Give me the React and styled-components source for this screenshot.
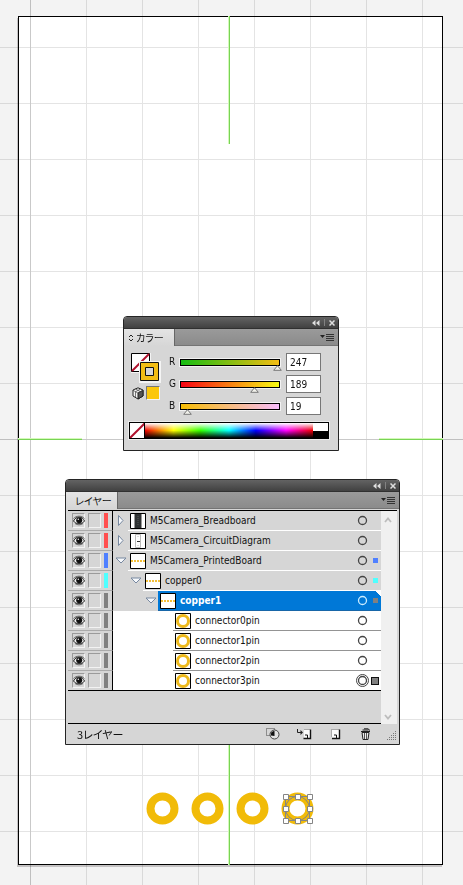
import React, { useState } from "react";
import styled, { createGlobalStyle, css } from "styled-components";

const Global = createGlobalStyle`
  *, *::before, *::after { box-sizing: border-box; }
  body {
    margin: 0;
    background: #f3f3f3;
    color: #111;
    font-family: "DejaVu Sans Condensed", "DejaVu Sans", "Noto Sans CJK JP", sans-serif;
    font-size: 10px;
    line-height: 16px;
  }
  button, input { font: inherit; color: inherit; margin: 0; padding: 0; }
  button { border: 0; background: none; }
  svg { display: block; }
`;

const Workspace = styled.main`
  position: relative;
  display: flex;
  min-height: 100vh;
  padding: 16px 20px 20px 18px;
  overflow: hidden;
`;

const Artboard = styled.section`
  flex: 1;
  border: 1px solid #000;
  background: #fff;
  box-shadow: -1px 2px 0 #c4c2c3;
`;

const Grid = styled.div`
  position: absolute;
  inset: 0;
  pointer-events: none;
  mix-blend-mode: multiply;
  background:
    linear-gradient(#c9c9c9, #c9c9c9) 30px 0 / 1px 100% no-repeat,
    linear-gradient(#c9c9c9, #c9c9c9) 0 439px / 100% 1px no-repeat,
    linear-gradient(90deg, #e4e4e4 1px, transparent 1px) 30px 0 / 56px 56px,
    linear-gradient(#e4e4e4 1px, transparent 1px) 0 47px / 56px 56px;
`;

const Guide = styled.i`
  position: absolute;
  background: #78d455;
  ${({ $axis }) =>
    $axis === "v"
      ? css`left: 229px; width: 1px; height: 128px; box-shadow: -1px 0 0 #d3f9b8;`
      : css`top: 439px; height: 1px; width: 64px; box-shadow: 0 -1px 0 #d3f9b8;`}
  ${({ $edge }) => $edge === "top" && "top: 16px;"}
  ${({ $edge }) => $edge === "bottom" && "bottom: 20px;"}
  ${({ $edge }) => $edge === "left" && "left: 18px;"}
  ${({ $edge }) => $edge === "right" && "right: 20px;"}
`;

const Rings = styled.div`
  position: absolute;
  left: 146px;
  top: 792px;
  display: flex;
  gap: 12px;
`;

const Window = styled.section`
  position: absolute;
  left: ${(p) => p.$left}px;
  top: ${(p) => p.$top}px;
  width: ${(p) => p.$width}px;
  border: 1px solid #242424;
  border-radius: 4px 4px 0 0;
  background: #d6d6d6;
`;

const TitleBar = styled.header`
  display: flex;
  justify-content: flex-end;
  align-items: center;
  height: 12px;
  border-radius: 3px 3px 0 0;
  background: linear-gradient(#636363, #414141);
  border-bottom: 1px solid #303030;
`;

const TitleButton = styled.button`
  display: grid;
  place-items: center;
  width: 12px;
  height: 11px;
`;

const TitleRule = styled.span`
  width: 1px;
  height: 7px;
  margin: 0 1px 0 2px;
  background: #828282;
`;

const TabBar = styled.div`
  display: flex;
  justify-content: space-between;
  height: 17px;
  background: linear-gradient(#9a9a9a, #8b8b8b);
  border-bottom: 1px solid #747474;
`;

const Tab = styled.button`
  display: flex;
  align-items: center;
  gap: 2px;
  height: 17px;
  width: ${(p) => p.$width}px;
  padding-left: ${(p) => p.$pad}px;
  background: linear-gradient(#e4e4e4, #d6d6d6);
  border-right: 1px solid #666;
  font-family: "Noto Sans CJK JP", sans-serif;
  font-feature-settings: "palt";
  font-size: 10px;
  line-height: 16px;
  white-space: nowrap;
`;

const MenuButton = styled.button`
  width: 14px;
  height: 16px;
  margin-right: 4px;
`;

const ColorBody = styled.div`
  padding: 7px 9px 11px 5px;
`;

const ColorTop = styled.div`
  display: grid;
  grid-template-columns: 40px 1fr;
`;

const SwatchColumn = styled.div`
  display: grid;
  grid-template-rows: 32px 14px;
  row-gap: 1px;
  padding-left: 2px;
`;

const SwatchRow = styled.div`
  display: flex;
  gap: 2px;
  align-items: center;
`;

const IconButton = styled.button`
  display: grid;
  place-items: center;
  width: ${(p) => p.$w}px;
  height: ${(p) => p.$h}px;
`;

const YellowSwatch = styled.button`
  width: 14px;
  height: 14px;
  border: 1px solid #f4f4f4;
  border-top-color: #777;
  border-left-color: #777;
  background: #fbc70b;
`;

const Channels = styled.div`
  display: grid;
  row-gap: 4px;
`;

const Channel = styled.div`
  display: grid;
  grid-template-columns: 10px 102px 35px;
  align-items: center;
  height: 18px;
`;

const ChannelName = styled.label`
  line-height: 18px;
`;

const Track = styled.div`
  height: 9px;
  border: 1px solid #f2f2f2;
  background: ${(p) => p.$fill};
  box-shadow: inset 0 0 0 1px #000;
`;

const Range = styled.input`
  appearance: none;
  display: block;
  width: 110px;
  height: 14px;
  margin: -1px -5px 0;
  background: transparent;
  &::-webkit-slider-runnable-track { height: 14px; }
  &::-webkit-slider-thumb {
    appearance: none;
    width: 9px;
    height: 6px;
    margin-top: 7px;
    background: url("data:image/svg+xml,%3Csvg xmlns='http://www.w3.org/2000/svg' width='9' height='6'%3E%3Cpath d='M4.5 .7L8.3 5.3H.7Z' fill='%23f2f2ec' stroke='%23777'/%3E%3C/svg%3E");
  }
`;

const NumberBox = styled.input`
  width: 35px;
  height: 18px;
  margin-left: 5px;
  padding-left: 3px;
  border: 1px solid #777;
  background: #fff;
  line-height: 16px;
`;

const Spectrum = styled.div`
  display: grid;
  grid-template-columns: 15px 1fr 15px;
  height: 17px;
  margin-top: 7px;
  border: 1px solid #000;
  outline: 1px solid #ececec;
`;

const Rainbow = styled.button`
  background:
    linear-gradient(#fff, rgba(255,255,255,0) 50%, rgba(0,0,0,0) 50%, #000),
    linear-gradient(90deg, #e00, #ff0 17%, #3f0 33%, #0ff 50%, #00f 66%, #f0f 84%, #e00);
`;

const MonoSwatch = styled.button`
  background: linear-gradient(#fff 50%, #000 50%);
`;

const LayerBody = styled.div`
  display: grid;
  grid-template-columns: 1fr 16px;
  margin: 1px 2px 0;
  border-top: 1px solid #000;
`;

const Tree = styled.ul`
  min-height: 213px;
  margin: 0;
  padding: 0;
  list-style: none;
  border-bottom: 1px solid #000;
`;

const Row = styled.li`
  display: grid;
  grid-template-columns: 45px 1fr;
  grid-template-rows: 100%;
  height: 20px;
  background: ${(p) => (p.$leaf ? "#fff" : "#d6d6d6")};
  &:last-child { border-bottom: 1px solid #000; }
  &:last-child * { border-bottom-width: 0; }
  &:last-child button { border-bottom-width: 1px; }
`;

const Flags = styled.div`
  display: flex;
  align-items: center;
  gap: 3px;
  padding-left: 4px;
  border-right: 1px solid #000;
  border-bottom: 1px solid #aaa;
  background: #d6d6d6;
`;

const FlagBox = styled.button`
  display: grid;
  place-items: center;
  width: 13px;
  height: 15px;
  border: 1px solid #f3f3f3;
  border-top-color: #9b9b9b;
  border-left-color: #9b9b9b;
`;

const ColorTag = styled.span`
  width: 4px;
  height: 15px;
  background: ${(p) => p.$color};
`;

const RowMain = styled.div`
  display: flex;
  justify-content: flex-end;
  padding-left: ${(p) => p.$indent}px;
`;

const Twisty = styled.button`
  display: grid;
  place-items: center;
  flex: 0 0 15px;
  height: 19px;
`;

const RowContent = styled.div`
  flex: 1;
  display: grid;
  grid-template-columns: 16px 1fr 13px 12px;
  align-items: center;
  padding-left: 2px;
  border-bottom: 1px solid ${(p) => (p.$leaf ? "#949494" : "#fff")};
  ${(p) =>
    p.$selected &&
    css`
      background: linear-gradient(225deg, #fff 4px, #0078d7 4px);
      color: #fff;
      font-weight: 700;
      border-bottom-color: #1766a8;
    `}
`;

const LayerName = styled.span`
  padding-left: 4px;
  line-height: 18px;
  white-space: nowrap;
`;

const TargetButton = styled.button`
  display: grid;
  place-items: center;
  width: 13px;
  height: 18px;
  && { border: 0; }
`;

const Mark = styled.span`
  justify-self: center;
  width: ${(p) => (p.$big ? 8 : 5)}px;
  height: ${(p) => (p.$big ? 8 : 5)}px;
  background: ${(p) => p.$color};
  ${(p) => p.$big && "outline: 1px solid #111; outline-offset: -1px;"}
`;

const ScrollBar = styled.div`
  display: flex;
  flex-direction: column;
  justify-content: space-between;
  background: #f0f0f0;
`;

const Footer = styled.footer`
  display: flex;
  align-items: center;
  height: 20px;
  padding-left: 11px;
`;

const Count = styled.span`
  flex: 1;
  font-family: "Noto Sans CJK JP", sans-serif;
  font-feature-settings: "palt";
  font-size: 11px;
  line-height: 16px;
`;

const FooterTools = styled.div`
  display: flex;
  align-items: center;
  gap: 15px;
`;

const GripCorner = styled.span`
  padding: 2px 2px 0 12px;
`;

const WindowTop = () => (
  <TitleBar>
    <TitleButton aria-label="Collapse">
      <svg width="8" height="6" viewBox="0 0 8 6"><path d="M3.500 0v6L0 3ZM7.500 0v6L4 3Z" fill="#dedede" /></svg>
    </TitleButton>
    <TitleRule />
    <TitleButton aria-label="Close">
      <svg width="6" height="6" viewBox="0 0 6 6"><path d="M.5.5l5 5M5.500.5l-5 5" stroke="#dedede" strokeWidth="1.500" /></svg>
    </TitleButton>
  </TitleBar>
);

const PanelMenu = () => (
  <MenuButton aria-label="Panel menu">
    <svg width="14" height="16" viewBox="0 0 14 16">
      <path d="M0 6h5L2.500 9Z" fill="#222" />
      <path d="M6 5.500h8M6 7.500h8M6 9.500h8M6 11.500h8" stroke="#333" />
    </svg>
  </MenuButton>
);

const NoneMark = () => (
  <svg width="15" height="15" viewBox="0 0 15 15">
    <path fill="#fff" d="M0 0h15v15H0z" />
    <path d="M0 15L15 0" stroke="#b0102c" strokeWidth="2" />
    <path d="M14.500 0v15" stroke="#000" />
  </svg>
);

const FillStroke = () => (
  <svg width="30" height="30" viewBox="0 0 30 30">
    <path d="M0 0h20v20H0z" fill="#f4f4f4" />
    <path d="M.5.5h18v18H.5z" fill="#fff" stroke="#000" />
    <path d="M1 18L18 1" stroke="#b0102c" strokeWidth="2" />
    <path d="M8 8h22v22H8z" fill="#f4f4f4" />
    <path d="M9.500 9.500h18v18h-18z" fill="#f3bd13" stroke="#111" />
    <path d="M14.500 14.500h8v8h-8z" fill="#d6d6d6" stroke="#111" />
  </svg>
);

const Cube = () => (
  <svg width="12" height="13" viewBox="0 0 12 13">
    <path d="M6 .8L11 3v6L6 12 1 9V3Z" fill="#f4f4f4" stroke="#222" />
    <path d="M6 6v6l5-3V3.300Z" fill="#555" stroke="#222" />
    <path d="M1 3.300L6 6l5-2.700M3.500 2l5 2.700M8.500 2l-5 2.700v6" fill="none" stroke="#444" strokeWidth=".7" />
  </svg>
);

const Eye = () => (
  <svg width="12" height="11" viewBox="0 0 12 11">
    <path d="M.5 6C2 3 4 2 6.300 2 9 2 10.500 4 11.500 6 10 8 8.500 8.700 6 8.700S2 8 .5 6Z" fill="#eee" stroke="#222" />
    <path d="M.5 3.500C3 .7 8.500.2 11.500 3.500M2 8.500c2 1.800 6 1.800 8 0" fill="none" stroke="#666" />
    <circle cx="6.200" cy="5.300" r="3" fill="#111" />
    <circle cx="5.300" cy="4.300" r=".8" fill="#eee" />
  </svg>
);

const Arrow = ({ open }) => (
  <svg width="12" height="13" viewBox="0 0 12 13">
    {open ? (
      <path d="M1 4h10L6 9Z" fill="#f6f8fb" stroke="#7788a0" />
    ) : (
      <path d="M3.500 1.500L8 6.500l-4.500 5Z" fill="#f6f8fb" stroke="#7788a0" />
    )}
  </svg>
);

const Thumb = ({ kind }) => (
  <svg width="16" height="16" viewBox="0 0 16 16">
    <path d="M.5.5h15v15H.5z" fill="#fff" stroke="#000" />
    {kind === "board" && (
      <>
        <path d="M5 1h6v14H5z" fill="#2f3233" />
        <path d="M4.500 1v14M11.500 1v14" stroke="#999" />
        <path d="M8 3v10" stroke="#55595b" strokeDasharray="1 1" />
      </>
    )}
    {kind === "circuit" && (
      <>
        <path d="M5.500 1.500h5v13h-5z" fill="#fff" stroke="#bbb" />
        <path d="M7 8.500h3" stroke="#333" />
        <path d="M7 3.500h2M7 12.500h2" stroke="#ddd" />
      </>
    )}
    {kind === "dots" && <path d="M1 8h14" stroke="#f3bf3a" strokeWidth="2" strokeDasharray="2 1" />}
    {kind === "ring" && <circle cx="8" cy="8" r="5.500" fill="#fff" stroke="#edb91c" strokeWidth="3" />}
  </svg>
);

const Target = ({ light, twin }) => (
  <svg width="13" height="13" viewBox="0 0 13 13">
    <circle cx="6.500" cy="6.500" r="4" fill="none" stroke={light ? "#c9ecff" : "#444"} strokeWidth="1.300" />
    {twin && <circle cx="6.500" cy="6.500" r="6" fill="none" stroke="#444" />}
  </svg>
);

const Chevron = ({ down }) => (
  <svg width="14" height="19" viewBox="0 0 14 19">
    <path d={down ? "M4 10l3 3.500L10 10" : "M4 11l3-3.500L10 11"} fill="none" stroke="#bdbdbd" strokeWidth="1.800" />
  </svg>
);

const Ring = ({ selected }) => (
  <svg width="33" height="33" viewBox="0 0 33 33">
    <circle cx="16.500" cy="16.500" r="12" fill="#fff" stroke="#f1bb08" strokeWidth="8" />
    {selected && (
      <g fill="none" stroke="#858585">
        <path d="M4.500 4.500h24v24h-24z" />
        <circle cx="16.500" cy="16.500" r="12" />
        <path
          fill="#fff"
          d="M2.500 2.500h5v5h-5zM14.500 2.500h5v5h-5zM26.500 2.500h5v5h-5zM2.500 14.500h5v5h-5zM26.500 14.500h5v5h-5zM2.500 26.500h5v5h-5zM14.500 26.500h5v5h-5zM26.500 26.500h5v5h-5z"
        />
      </g>
    )}
  </svg>
);

const MaskIcon = () => (
  <svg width="14" height="12" viewBox="0 0 14 12">
    <path d="M.5.5h8v7h-8z" fill="none" stroke="#444" strokeDasharray="1 1" />
    <circle cx="8.500" cy="6.500" r="4.500" fill="#e2e2e2" stroke="#444" />
    <path d="M5 7.500A3.500 3.500 0 0 1 8.500 3v5Z" fill="#111" />
  </svg>
);

const SublayerIcon = () => (
  <svg width="16" height="12" viewBox="0 0 16 12">
    <path d="M1.500 1v3.500H6" fill="none" stroke="#222" />
    <path d="M4.500 2L7 4.500 4.500 7Z" fill="#222" />
    <path d="M8 2h6v8H8z" fill="#fafafa" />
    <path d="M8 1.500h6" stroke="#aaa" />
    <path d="M14.500 1.500v9H7.500" fill="none" stroke="#111" strokeWidth="1.400" />
    <path d="M9 7h2.500v3" fill="none" stroke="#111" />
  </svg>
);

const NewLayerIcon = () => (
  <svg width="11" height="12" viewBox="0 0 11 12">
    <path d="M1 2h8v8H1z" fill="#fafafa" />
    <path d="M1 1.500h8M1.500 1.500v8" stroke="#aaa" />
    <path d="M9.500 1.500v9H2" fill="none" stroke="#111" strokeWidth="1.400" />
    <path d="M4 7h2.500v3" fill="none" stroke="#111" />
  </svg>
);

const TrashIcon = () => (
  <svg width="12" height="12" viewBox="0 0 12 12">
    <path d="M2 4.500h7l-1 7H3Z" fill="#eee" stroke="#222" />
    <path d="M4.500 5v6M6.500 5v6" stroke="#555" />
    <path d="M1 3.500h9M2.500 2h6M4 .8h4l2 1.700" fill="none" stroke="#222" />
  </svg>
);

const Grip = () => (
  <svg width="11" height="11" viewBox="0 0 11 11">
    <path
      d="M9.500 1v10M7.500 3v8M5.500 5v6M3.500 7v4M1.500 9v2"
      stroke="#777"
      strokeDasharray="1 1"
    />
  </svg>
);

const CHANNELS = [
  { name: "R", value: 247, fill: "linear-gradient(90deg, #13bd13, #f7bd13)" },
  { name: "G", value: 189, fill: "linear-gradient(90deg, #f70013, #f7ff13)" },
  { name: "B", value: 19, fill: "linear-gradient(90deg, #f7bd00, #f7bdff)" },
];

const LAYERS = [
  { name: "M5Camera_Breadboard", depth: 0, kind: "board", tag: "#ff4f4f", open: false },
  { name: "M5Camera_CircuitDiagram", depth: 0, kind: "circuit", tag: "#ff4f4f", open: false },
  { name: "M5Camera_PrintedBoard", depth: 0, kind: "dots", tag: "#4f80ff", open: true, mark: "#4f80ff" },
  { name: "copper0", depth: 1, kind: "dots", tag: "#4fffff", open: true, mark: "#4fffff" },
  { name: "copper1", depth: 2, kind: "dots", tag: "#808080", open: true, mark: "#808080", selected: true },
  { name: "connector0pin", depth: 3, kind: "ring", tag: "#808080", leaf: true },
  { name: "connector1pin", depth: 3, kind: "ring", tag: "#808080", leaf: true },
  { name: "connector2pin", depth: 3, kind: "ring", tag: "#808080", leaf: true },
  { name: "connector3pin", depth: 3, kind: "ring", tag: "#808080", leaf: true, mark: "#808080", active: true },
];

function ColorPanel() {
  const [values, setValues] = useState(CHANNELS.map((c) => c.value));
  const change = (i) => (e) => setValues(values.map((v, n) => (n === i ? Number(e.target.value) || 0 : v)));
  return (
    <Window $left={123} $top={316} $width={216}>
      <WindowTop />
      <TabBar>
        <Tab $width={51} $pad={4}>
          <svg width="6" height="8" viewBox="0 0 6 8">
            <path d="M1 3l2-2 2 2M1 5l2 2 2-2" fill="none" stroke="#222" />
          </svg>
          カラー
        </Tab>
        <PanelMenu />
      </TabBar>
      <ColorBody>
        <ColorTop>
          <SwatchColumn>
            <FillStroke />
            <SwatchRow>
              <IconButton $w={13} $h={13} aria-label="Web color cube"><Cube /></IconButton>
              <YellowSwatch aria-label="Web safe color" />
            </SwatchRow>
          </SwatchColumn>
          <Channels>
            {CHANNELS.map((c, i) => (
              <Channel key={c.name}>
                <ChannelName htmlFor={`value-${c.name}`}>{c.name}</ChannelName>
                <Track $fill={c.fill}>
                  <Range type="range" min="0" max="255" value={values[i]} onChange={change(i)} aria-label={c.name} />
                </Track>
                <NumberBox id={`value-${c.name}`} value={values[i]} onChange={change(i)} />
              </Channel>
            ))}
          </Channels>
        </ColorTop>
        <Spectrum>
          <IconButton $w={15} $h={15} aria-label="None"><NoneMark /></IconButton>
          <Rainbow aria-label="Color spectrum" />
          <MonoSwatch aria-label="White or black" />
        </Spectrum>
      </ColorBody>
    </Window>
  );
}

function LayerRow({ layer }) {
  const { name, depth, kind, tag, open, mark, selected, leaf, active } = layer;
  return (
    <Row $leaf={leaf}>
      <Flags>
        <FlagBox aria-label={`Show ${name}`}><Eye /></FlagBox>
        <FlagBox aria-label={`Lock ${name}`} />
        <ColorTag $color={tag} />
      </Flags>
      <RowMain $indent={depth * 15}>
        {!leaf && <Twisty aria-label={`Expand ${name}`}><Arrow open={open} /></Twisty>}
        {leaf && <Twisty as="span" />}
        <RowContent $leaf={leaf} $selected={selected}>
          <Thumb kind={kind} />
          <LayerName>{name}</LayerName>
          <TargetButton aria-label={`Target ${name}`}><Target light={selected} twin={active} /></TargetButton>
          {mark && <Mark $color={mark} $big={active} />}
        </RowContent>
      </RowMain>
    </Row>
  );
}

function LayersPanel() {
  return (
    <Window $left={65} $top={479} $width={335}>
      <WindowTop />
      <TabBar>
        <Tab $width={52} $pad={9}>レイヤー</Tab>
        <PanelMenu />
      </TabBar>
      <LayerBody>
        <Tree>
          {LAYERS.map((layer) => <LayerRow key={layer.name} layer={layer} />)}
        </Tree>
        <ScrollBar>
          <IconButton $w={14} $h={19} aria-label="Scroll up"><Chevron /></IconButton>
          <IconButton $w={14} $h={19} aria-label="Scroll down"><Chevron down /></IconButton>
        </ScrollBar>
      </LayerBody>
      <Footer>
        <Count>3レイヤー</Count>
        <FooterTools>
          <IconButton $w={16} $h={16} aria-label="Clipping mask"><MaskIcon /></IconButton>
          <IconButton $w={16} $h={16} aria-label="New sublayer"><SublayerIcon /></IconButton>
          <IconButton $w={16} $h={16} aria-label="New layer"><NewLayerIcon /></IconButton>
          <IconButton $w={16} $h={16} aria-label="Delete"><TrashIcon /></IconButton>
        </FooterTools>
        <GripCorner><Grip /></GripCorner>
      </Footer>
    </Window>
  );
}

export default function App() {
  return (
    <>
      <Global />
      <Workspace>
        <Artboard aria-label="Artboard" />
        <Grid />
        <Guide $axis="v" $edge="top" />
        <Guide $axis="v" $edge="bottom" />
        <Guide $axis="h" $edge="left" />
        <Guide $axis="h" $edge="right" />
        <Rings>
          <Ring />
          <Ring />
          <Ring />
          <Ring selected />
        </Rings>
        <ColorPanel />
        <LayersPanel />
      </Workspace>
    </>
  );
}
